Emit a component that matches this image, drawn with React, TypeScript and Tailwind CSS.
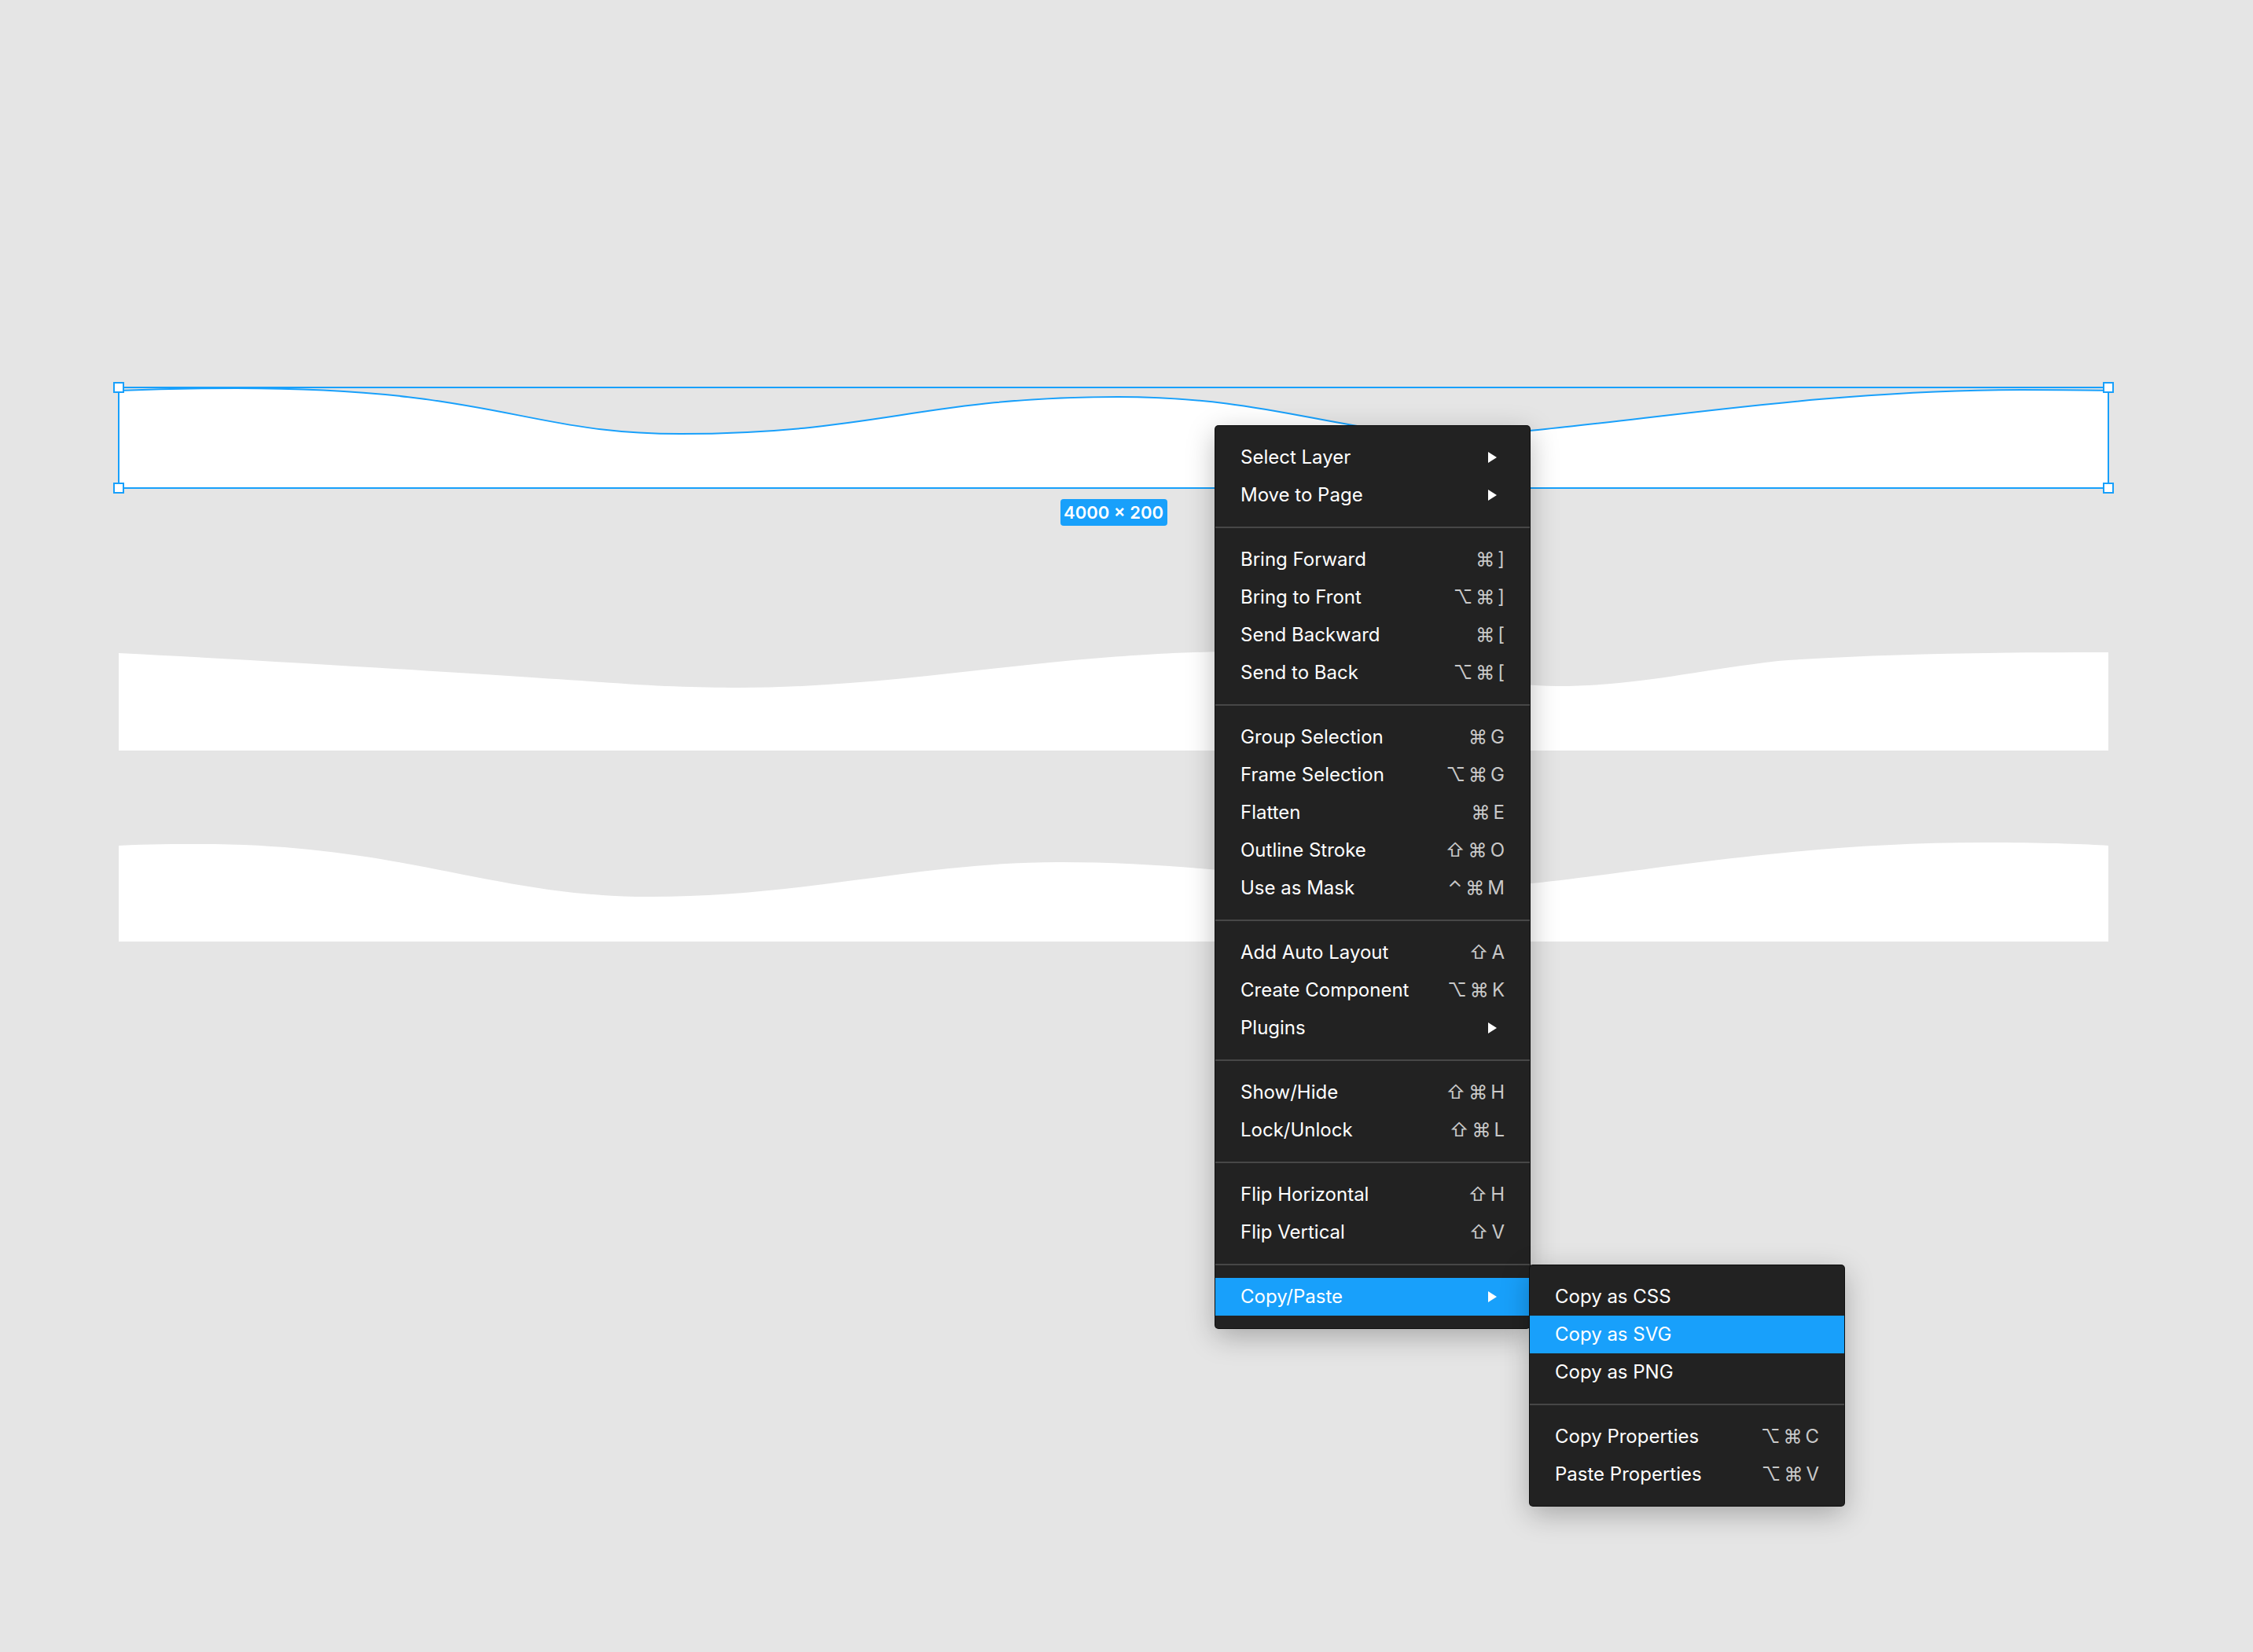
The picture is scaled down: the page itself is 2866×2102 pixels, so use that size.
import React from 'react';

type Item = {
    label: string;
    keys?: string[];
    sub?: boolean;
    active?: boolean;
};

const mainMenu: Item[][] = [
    [
        { label: 'Select Layer', sub: true },
        { label: 'Move to Page', sub: true },
    ],
    [
        { label: 'Bring Forward', keys: ['⌘', ']'] },
        { label: 'Bring to Front', keys: ['⌥', '⌘', ']'] },
        { label: 'Send Backward', keys: ['⌘', '['] },
        { label: 'Send to Back', keys: ['⌥', '⌘', '['] },
    ],
    [
        { label: 'Group Selection', keys: ['⌘', 'G'] },
        { label: 'Frame Selection', keys: ['⌥', '⌘', 'G'] },
        { label: 'Flatten', keys: ['⌘', 'E'] },
        { label: 'Outline Stroke', keys: ['⇧', '⌘', 'O'] },
        { label: 'Use as Mask', keys: ['⌃', '⌘', 'M'] },
    ],
    [
        { label: 'Add Auto Layout', keys: ['⇧', 'A'] },
        { label: 'Create Component', keys: ['⌥', '⌘', 'K'] },
        { label: 'Plugins', sub: true },
    ],
    [
        { label: 'Show/Hide', keys: ['⇧', '⌘', 'H'] },
        { label: 'Lock/Unlock', keys: ['⇧', '⌘', 'L'] },
    ],
    [
        { label: 'Flip Horizontal', keys: ['⇧', 'H'] },
        { label: 'Flip Vertical', keys: ['⇧', 'V'] },
    ],
    [{ label: 'Copy/Paste', sub: true, active: true }],
];

const copyMenu: Item[][] = [
    [
        { label: 'Copy as CSS' },
        { label: 'Copy as SVG', active: true },
        { label: 'Copy as PNG' },
    ],
    [
        { label: 'Copy Properties', keys: ['⌥', '⌘', 'C'] },
        { label: 'Paste Properties', keys: ['⌥', '⌘', 'V'] },
    ],
];

// wave outlines, in the 2531 x 128 box of each shape
const waves = {
    selected:
        'M0,4 C50,2 100,1 150,1 C480,1 515,59 715,59 C965,59 1021,12 1271,12 C1471,12 1550,60 1700,60 C1850,60 2120,3 2420,3 C2470,3 2500,3 2531,4',
    second:
        'M0,4 C200,14 450,30 600,40 C680,46 730,48 789,48 C950,48 1100,22 1250,10 C1330,4 1380,2 1430,2 C1600,2 1720,46 1830,46 C1930,46 2000,27 2111,14 C2250,4 2400,3 2531,3',
    third:
        'M0,6 C40,4 70,4 103,4 C363,4 475,71 675,71 C875,71 1017,27 1197,27 C1397,27 1550,60 1700,60 C1850,60 2073,2 2373,2 C2450,2 2500,4 2531,6',
};

const Wave = ({ d, stroke }: { d: string; stroke?: boolean }) => (
    <svg width="2531" height="128" viewBox="0 0 2531 128" className="block">
        <path d={`${d} L2531,128 L0,128 Z`} fill="#ffffff" />
        {stroke && <path d={d} fill="none" stroke="#18a0fb" strokeWidth="2" />}
    </svg>
);

const Handle = ({ className }: { className: string }) => (
    <div className={`absolute w-[14px] h-[14px] bg-white border-2 border-[#18a0fb] ${className}`} />
);

const Arrow = () => (
    <svg width="11" height="14" viewBox="0 0 11 14" className="mr-[10px]">
        <polygon points="0,0 11,7 0,14" fill="#ffffff" />
    </svg>
);

const MenuRow = ({ item }: { item: Item }) => (
    <div
        className={`h-[48px] flex items-center justify-between px-[32px] ${
            item.active ? 'bg-[#18a0fb]' : ''
        }`}
    >
        <span className="text-[24px] text-white">{item.label}</span>
        {item.sub && <Arrow />}
        {item.keys && (
            <span className="flex items-center gap-[4px] text-[24px] text-[#c9c9c9] font-['Inter','DejaVu_Sans',sans-serif]">
                {item.keys.map((k, i) => (
                    <span key={i}>{k}</span>
                ))}
            </span>
        )}
    </div>
);

const Menu = ({ groups, className }: { groups: Item[][]; className: string }) => (
    <div
        className={`absolute w-[400px] bg-[#222222] rounded-[4px] ring-1 ring-[#0e0e0e] shadow-[0_10px_36px_rgba(0,0,0,0.28)] ${className}`}
    >
        {groups.map((group, gi) => (
            <div key={gi}>
                {gi > 0 && <div className="h-[2px] bg-[#474747]" />}
                <div className="py-[16px]">
                    {group.map((item) => (
                        <MenuRow key={item.label} item={item} />
                    ))}
                </div>
            </div>
        ))}
    </div>
);

const App = () => {
    return (
        <div className="relative w-[2866px] h-[2102px] overflow-hidden bg-[#e5e5e5] font-['Inter',sans-serif] antialiased">
            {/* canvas shapes */}
            <div className="flex flex-col items-start pl-[151px] pt-[493px]">
                <div className="relative">
                    <Wave d={waves.selected} stroke />
                    {/* selection frame */}
                    <div className="absolute -inset-[1px] border-2 border-[#18a0fb]" />
                    <Handle className="-left-[7px] -top-[7px]" />
                    <Handle className="-right-[7px] -top-[7px]" />
                    <Handle className="-left-[7px] -bottom-[7px]" />
                    <Handle className="-right-[7px] -bottom-[7px]" />
                    <div className="absolute left-1/2 top-[142px] -translate-x-1/2 w-[136px] h-[34px] rounded-[4px] bg-[#18a0fb] flex items-center justify-center text-[22px] font-semibold text-white whitespace-nowrap">
                        4000 × 200
                    </div>
                </div>
                <div className="mt-[206px]">
                    <Wave d={waves.second} />
                </div>
                <div className="mt-[115px]">
                    <Wave d={waves.third} />
                </div>
            </div>

            {/* context menus */}
            <Menu groups={mainMenu} className="left-[1546px] top-[542px]" />
            <Menu groups={copyMenu} className="left-[1946px] top-[1610px]" />
        </div>
    );
};

export default App;
